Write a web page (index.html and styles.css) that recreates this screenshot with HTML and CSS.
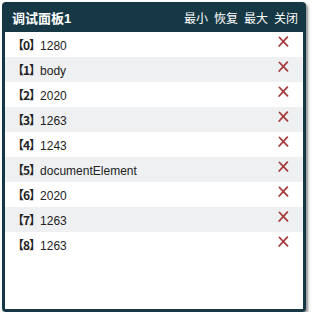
FILE: index.html
```html
<!DOCTYPE html>
<html>
<head>
<meta charset="utf-8">
<link rel="stylesheet" href="styles.css">
</head>
<body>
<div class="panel">
  <div class="head">
    <span class="title">调试面板1</span>
    <span class="actions"><span>最小</span><span>恢复</span><span>最大</span><span>关闭</span></span>
  </div>
  <div class="list">
    <div class="row"><span class="txt"><b>【0】</b>1280</span><svg class="del" viewBox="0 0 11 11"><path d="M1.5 1.5L9.5 9.8M9.3 1.2L1.2 10" /></svg></div>
    <div class="row alt"><span class="txt"><b>【1】</b>body</span><svg class="del" viewBox="0 0 11 11"><path d="M1.5 1.5L9.5 9.8M9.3 1.2L1.2 10" /></svg></div>
    <div class="row"><span class="txt"><b>【2】</b>2020</span><svg class="del" viewBox="0 0 11 11"><path d="M1.5 1.5L9.5 9.8M9.3 1.2L1.2 10" /></svg></div>
    <div class="row alt"><span class="txt"><b>【3】</b>1263</span><svg class="del" viewBox="0 0 11 11"><path d="M1.5 1.5L9.5 9.8M9.3 1.2L1.2 10" /></svg></div>
    <div class="row"><span class="txt"><b>【4】</b>1243</span><svg class="del" viewBox="0 0 11 11"><path d="M1.5 1.5L9.5 9.8M9.3 1.2L1.2 10" /></svg></div>
    <div class="row alt"><span class="txt"><b>【5】</b>documentElement</span><svg class="del" viewBox="0 0 11 11"><path d="M1.5 1.5L9.5 9.8M9.3 1.2L1.2 10" /></svg></div>
    <div class="row"><span class="txt"><b>【6】</b>2020</span><svg class="del" viewBox="0 0 11 11"><path d="M1.5 1.5L9.5 9.8M9.3 1.2L1.2 10" /></svg></div>
    <div class="row alt"><span class="txt"><b>【7】</b>1263</span><svg class="del" viewBox="0 0 11 11"><path d="M1.5 1.5L9.5 9.8M9.3 1.2L1.2 10" /></svg></div>
    <div class="row"><span class="txt"><b>【8】</b>1263</span><svg class="del" viewBox="0 0 11 11"><path d="M1.5 1.5L9.5 9.8M9.3 1.2L1.2 10" /></svg></div>
  </div>
</div>
</body>
</html>
```
FILE: styles.css
```css
html, body {
  margin: 0;
  padding: 0;
  background: #fff;
}
body {
  font-family: "Liberation Sans", Arial, "Noto Sans CJK SC", sans-serif;
}
.panel {
  margin: 2px 0 0 2px;
  width: 304px;
  height: 310px;
  box-sizing: border-box;
  background: #163845;
  border-radius: 4px;
  padding: 0 3px 3px 3px;
  display: flex;
  flex-direction: column;
  box-shadow: 2px 2px 3px rgba(0, 0, 0, 0.45);
}
.head {
  height: 30px;
  flex: none;
  display: flex;
  align-items: center;
  justify-content: space-between;
  padding: 0 5px 0 7px;
  color: #fff;
}
.title {
  font-family: "Liberation Sans", Arial, "Noto Sans CJK SC", sans-serif;
  font-weight: bold;
  font-size: 13px;
}
.actions {
  display: flex;
  gap: 6px;
  font-family: "Noto Sans CJK SC", sans-serif;
  font-size: 12px;
}
.list {
  flex: 1;
  background: #fff;
}
.row {
  height: 25px;
  display: flex;
  justify-content: space-between;
  align-items: flex-start;
  padding: 0 14px 0 7px;
  font-size: 12px;
  color: #222;
}
.row.alt {
  background: #eef0f2;
}
.txt {
  line-height: 25px;
}
.txt b {
  font-family: "Noto Sans CJK SC", sans-serif;
  font-weight: bold;
  letter-spacing: -1px;
}
.del {
  width: 11px;
  height: 11px;
  margin-top: 4px;
  fill: none;
  stroke: #a63a3a;
  stroke-width: 1.8;
  stroke-linecap: round;
}
```
